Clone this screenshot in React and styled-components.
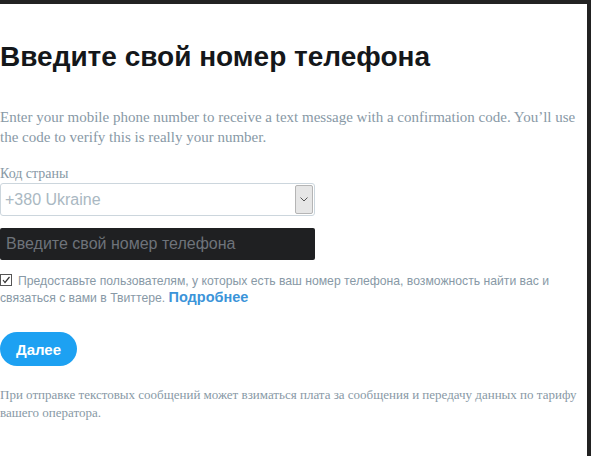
import React from 'react';
import styled, {createGlobalStyle} from 'styled-components';

const GlobalStyle = createGlobalStyle`
  html, body {
    margin: 0;
    padding: 0;
    background: #fff;
  }
  body {
    width: 591px;
    height: 456px;
    overflow: hidden;
  }
`

const Frame = styled.div`
  box-sizing: border-box;
  width: 591px;
  height: 456px;
  border-top: 4px solid #222;
  border-right: 4px solid #222;
  background: #fff;
  padding-top: 37px;
  overflow: hidden;
`

const Title = styled.h1`
  margin: 0 0 34px 0;
  font-family: "Liberation Sans", Arial, sans-serif;
  font-size: 28px;
  font-weight: bold;
  color: #14171a;
  line-height: 32px;
`

const Lead = styled.p`
  margin: 0 0 18px 0;
  font-family: "Liberation Serif", "Times New Roman", serif;
  font-size: 15px;
  line-height: 20px;
  color: #8899a6;
`

const Label = styled.div`
  font-family: "Liberation Serif", "Times New Roman", serif;
  font-size: 14px;
  line-height: 18px;
  color: #8899a6;
`

const SelectBox = styled.div`
  box-sizing: border-box;
  width: 315px;
  height: 33px;
  border: 1px solid #ccd6dd;
  border-radius: 3px;
  display: flex;
  align-items: stretch;
  margin-bottom: 12px;
`

const SelectValue = styled.div`
  flex: 1;
  display: flex;
  align-items: center;
  padding-left: 4px;
  font-family: "Liberation Sans", Arial, sans-serif;
  font-size: 16px;
  color: #aab8c2;
`

const SelectArrow = styled.div`
  width: 16px;
  margin: 1px 1px 1px 0;
  background: #e6e6e6;
  border: 1px solid #b5b5b5;
  border-radius: 2px;
  display: flex;
  align-items: center;
  justify-content: center;
`

const PhoneInput = styled.div`
  box-sizing: border-box;
  width: 315px;
  height: 32px;
  background: #1f2022;
  border-radius: 2px;
  display: flex;
  align-items: center;
  padding-left: 6px;
  font-family: "Liberation Sans", Arial, sans-serif;
  font-size: 16px;
  color: #6e737a;
  margin-bottom: 13px;
`

const Consent = styled.div`
  font-family: "Liberation Sans", Arial, sans-serif;
  font-size: 12.2px;
  line-height: 16px;
  color: #8899a6;
  width: 570px;
  margin-bottom: 26px;
`

const Check = styled.span`
  display: inline-block;
  box-sizing: border-box;
  width: 12px;
  height: 12px;
  border: 1px solid #555;
  vertical-align: -1px;
  margin-right: 6px;
  position: relative;
  background: #fff;
`

const Link = styled.a`
  font-size: 14.5px;
  line-height: 16px;
  font-weight: bold;
  color: #3b94d9;
  text-decoration: none;
`

const Button = styled.button`
  height: 34px;
  padding: 0 16px;
  border: none;
  border-radius: 17px;
  background: #1da1f2;
  color: #fff;
  font-family: "Liberation Sans", Arial, sans-serif;
  font-size: 15px;
  font-weight: bold;
  margin-bottom: 20px;
  display: block;
`

const Note = styled.p`
  margin: 0;
  font-family: "Liberation Serif", "Times New Roman", serif;
  font-size: 13px;
  line-height: 18px;
  color: #8899a6;
  width: 585px;
`

export default function App() {
    return (
        <>
            <GlobalStyle/>
            <Frame>
                <Title>Введите свой номер телефона</Title>
                <Lead>
                    Enter your mobile phone number to receive a text message with a confirmation code. You’ll use
                    the code to verify this is really your number.
                </Lead>
                <Label>Код страны</Label>
                <SelectBox>
                    <SelectValue>+380 Ukraine</SelectValue>
                    <SelectArrow>
                        <svg width="8" height="5" viewBox="0 0 8 5">
                            <path d="M0.5 0.5 L4 4 L7.5 0.5" fill="none" stroke="#555" strokeWidth="1"/>
                        </svg>
                    </SelectArrow>
                </SelectBox>
                <PhoneInput>Введите свой номер телефона</PhoneInput>
                <Consent>
                    <Check>
                        <svg width="10" height="10" viewBox="0 0 10 10" style={{position: 'absolute', left: 0, top: 0}}>
                            <path d="M2 5 L4 7.5 L8.5 2" fill="none" stroke="#333" strokeWidth="1.2"/>
                        </svg>
                    </Check>
                    Предоставьте пользователям, у которых есть ваш номер телефона, возможность найти вас и
                    связаться с вами в Твиттере. <Link href="#">Подробнее</Link>
                </Consent>
                <Button>Далее</Button>
                <Note>
                    При отправке текстовых сообщений может взиматься плата за сообщения и передачу данных по тарифу
                    вашего оператора.
                </Note>
            </Frame>
        </>
    );
}
